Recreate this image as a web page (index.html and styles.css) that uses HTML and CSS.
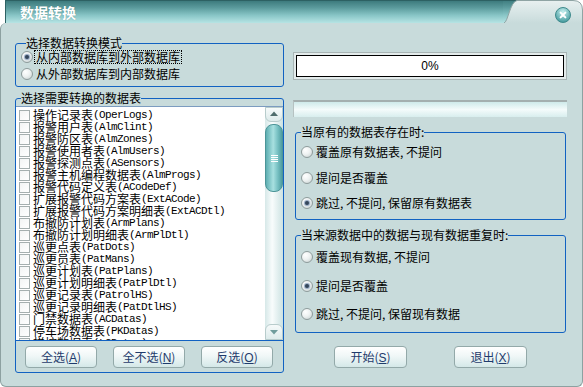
FILE: index.html
```html
<html>
  <head>
    <title>数据转换</title>
    <link rel="stylesheet" href="styles.css">
  </head>
  <body>
    <div class="window">
      <div class="titlebar">
        <div class="title-main">数据转换</div>
        <svg class="title-tab" width="80" height="23" viewBox="0 0 80 23">
          <defs>
            <linearGradient id="tg" x1="0" y1="0" x2="0" y2="1">
              <stop offset="0" stop-color="#3d7b7e"/>
              <stop offset="0.3" stop-color="#5a9a9c"/>
              <stop offset="0.65" stop-color="#88c5c6"/>
              <stop offset="1" stop-color="#b6e4e4"/>
            </linearGradient>
            <linearGradient id="tab" x1="0" y1="0" x2="0" y2="1">
              <stop offset="0" stop-color="#e8f0f0"/>
              <stop offset="1" stop-color="#c8dbdb"/>
            </linearGradient>
            <radialGradient id="cb" cx="0.5" cy="0.3" r="0.65">
              <stop offset="0" stop-color="#c8f0f0"/>
              <stop offset="1" stop-color="#4a9ea1"/>
            </radialGradient>
          </defs>
          <rect x="0" y="0" width="16" height="23" fill="url(#tg)"/>
          <rect x="0" y="0" width="16" height="1" fill="#2d6163"/>
          <path d="M1 23 C5 22 7 2 14 0.5 L70 0.5 Q79.5 0.5 79.5 10 L79.5 23 Z" fill="url(#tab)"/>
          <path d="M1 23 C5 22 7 2 14 0.5 L70 0.5 Q79.5 0.5 79.5 10 L79.5 23" fill="none" stroke="#8fa4a4"/>
          <circle cx="60" cy="15" r="7.5" fill="url(#cb)" stroke="#3f8a8c"/>
          <path d="M57.6 12.6 L62.4 17.4 M62.4 12.6 L57.6 17.4" stroke="#fff" stroke-width="2" stroke-linecap="round"/>
        </svg>
      </div>
      <div class="client">
        <div class="col-left">
          <fieldset class="group mode">
            <legend>选择数据转换模式</legend>
            <div class="opt"><span class="radio on"></span><span class="label focus">从内部数据库到外部数据库</span></div>
            <div class="opt"><span class="radio"></span><span class="label">从外部数据库到内部数据库</span></div>
          </fieldset>
          <fieldset class="group tables">
            <legend>选择需要转换的数据表</legend>
            <div class="list">
              <div class="items">
                <div class="item"><span class="chk"></span>操作记录表<span class="en">(OperLogs)</span></div>
                <div class="item"><span class="chk"></span>报警用户表<span class="en">(AlmClint)</span></div>
                <div class="item"><span class="chk"></span>报警防区表<span class="en">(AlmZones)</span></div>
                <div class="item"><span class="chk"></span>报警使用者表<span class="en">(AlmUsers)</span></div>
                <div class="item"><span class="chk"></span>报警探测点表<span class="en">(ASensors)</span></div>
                <div class="item"><span class="chk"></span>报警主机编程数据表<span class="en">(AlmProgs)</span></div>
                <div class="item"><span class="chk"></span>报警代码定义表<span class="en">(ACodeDef)</span></div>
                <div class="item"><span class="chk"></span>扩展报警代码方案表<span class="en">(ExtACode)</span></div>
                <div class="item"><span class="chk"></span>扩展报警代码方案明细表<span class="en">(ExtACDtl)</span></div>
                <div class="item"><span class="chk"></span>布撤防计划表<span class="en">(ArmPlans)</span></div>
                <div class="item"><span class="chk"></span>布撤防计划明细表<span class="en">(ArmPlDtl)</span></div>
                <div class="item"><span class="chk"></span>巡更点表<span class="en">(PatDots)</span></div>
                <div class="item"><span class="chk"></span>巡更员表<span class="en">(PatMans)</span></div>
                <div class="item"><span class="chk"></span>巡更计划表<span class="en">(PatPlans)</span></div>
                <div class="item"><span class="chk"></span>巡更计划明细表<span class="en">(PatPlDtl)</span></div>
                <div class="item"><span class="chk"></span>巡更记录表<span class="en">(PatrolHS)</span></div>
                <div class="item"><span class="chk"></span>巡更记录明细表<span class="en">(PatDtlHS)</span></div>
                <div class="item"><span class="chk"></span>门禁数据表<span class="en">(ACDatas)</span></div>
                <div class="item"><span class="chk"></span>停车场数据表<span class="en">(PKDatas)</span></div>
                <div class="item"><span class="chk"></span>梯控数据表<span class="en">(LCDatas)</span></div>
              </div>
              <div class="sb">
                <div class="sb-btn sb-up">
                  <svg width="8" height="5" viewBox="0 0 8 5"><path d="M0 5 L4 0.5 L8 5 Z" fill="#4f6d6d"/></svg>
                </div>
                <div class="sb-thumb"><span class="grip"></span></div>
                <div class="sb-track"></div>
                <div class="sb-btn sb-down">
                  <svg width="8" height="5" viewBox="0 0 8 5"><path d="M0 0 L4 4.5 L8 0 Z" fill="#6f9c9c"/></svg>
                </div>
              </div>
            </div>
            <div class="btn-row">
              <button class="btn">全选(<u>A</u>)</button>
              <button class="btn">全不选(<u>N</u>)</button>
              <button class="btn">反选(<u>O</u>)</button>
            </div>
          </fieldset>
        </div>
        <div class="col-right">
          <div class="progress"><div class="progress-in">0%</div></div>
          <div class="bar"></div>
          <fieldset class="group exist">
            <legend>当原有的数据表存在时:</legend>
            <div class="opts">
              <div class="opt"><span class="radio"></span><span class="label">覆盖原有数据表, 不提问</span></div>
              <div class="opt"><span class="radio"></span><span class="label">提问是否覆盖</span></div>
              <div class="opt"><span class="radio on"></span><span class="label">跳过, 不提问, 保留原有数据表</span></div>
            </div>
          </fieldset>
          <fieldset class="group dup">
            <legend>当来源数据中的数据与现有数据重复时:</legend>
            <div class="opts">
              <div class="opt"><span class="radio"></span><span class="label">覆盖现有数据, 不提问</span></div>
              <div class="opt"><span class="radio on"></span><span class="label">提问是否覆盖</span></div>
              <div class="opt"><span class="radio"></span><span class="label">跳过, 不提问, 保留现有数据</span></div>
            </div>
          </fieldset>
          <div class="btn-row actions">
            <button class="btn">开始(<u>S</u>)</button>
            <button class="btn">退出(<u>X</u>)</button>
          </div>
        </div>
      </div>
    </div>
  </body>
</html>
```

FILE: styles.css
```css
body {
  margin: 0px;
  padding: 0px;
  background-color: #FFF;
  font-family: "Noto Sans CJK SC", sans-serif;
  font-size: 12px;
  color: #000;
}
.window {
  width: 583px;
  height: 387px;
}
.titlebar {
  display: flex;
  height: 23px;
}
.title-main {
  flex: 1;
  margin-left: 5px;
  box-sizing: border-box;
  height: 23px;
  border-top: 1px solid #2D6163;
  border-left: 1px solid #2D6163;
  background: linear-gradient(to bottom, #3D7B7E 0%, #5A9A9C 30%, #88C5C6 65%, #B6E4E4 100%);
  color: #FFF;
  font-weight: bold;
  font-size: 14px;
  line-height: 22px;
  padding-left: 14px;
  text-shadow: 0 0 1px rgba(30, 80, 80, 0.4);
}
.title-tab {
  display: block;
}
.client {
  box-sizing: border-box;
  height: 364px;
  background-color: #C8DBDB;
  border: 1px solid #8DA1A1;
  border-top: 0;
  border-radius: 6px 0 6px 6px;
  display: grid;
  grid-template-columns: 269px 274px;
  column-gap: 9px;
  align-items: start;
  padding: 14px 0 0 14px;
}
.col-left, .col-right {
  display: flex;
  flex-direction: column;
}

/* group boxes */
.group {
  margin: 0;
  padding: 0;
  min-width: 0;
  border: 1px solid #1262C2;
  border-radius: 3px;
}
.group legend {
  padding: 0;
  margin-left: 5px;
  line-height: 12px;
  font-size: 12px;
}
.opt {
  display: flex;
  align-items: center;
  height: 14px;
}
.label {
  line-height: 12px;
  white-space: nowrap;
}
.focus {
  outline: 1px dotted #000;
  outline-offset: 0px;
  padding: 0 1px;
  margin-left: -1px;
}
.radio {
  box-sizing: border-box;
  width: 12px;
  height: 12px;
  border-radius: 50%;
  border: 1px solid #8E9C9C;
  background: radial-gradient(circle at 35% 30%, #FFF 0%, #EEF2F2 45%, #C4CECE 100%);
  margin-right: 3px;
  position: relative;
  flex: none;
}
.radio.on::after {
  content: "";
  position: absolute;
  left: 3px;
  top: 3px;
  width: 4px;
  height: 4px;
  border-radius: 50%;
  background: #34465A;
  box-shadow: 0 0 1px 1px #8FA4C0;
}

.mode {
  padding: 1px 0 5px 5px;
}
.mode .opt + .opt {
  margin-top: 3px;
}
.tables {
  margin-top: 5px;
}

/* table list */
.list {
  display: flex;
  margin-top: 2px;
  height: 235px;
  box-sizing: border-box;
  border-top: 1px solid #7C9CC0;
  border-bottom: 1px solid #1262C2;
  background-color: #FFF;
}
.items {
  flex: 1;
  overflow: hidden;
  padding: 2px 0 0 3px;
}
.item {
  display: flex;
  align-items: center;
  height: 12px;
  line-height: 12px;
  white-space: nowrap;
}
.chk {
  box-sizing: border-box;
  width: 11px;
  height: 11px;
  border: 1px solid #A5AFAF;
  background: linear-gradient(135deg, #F2F4F4, #FFF);
  margin-right: 3px;
  flex: none;
}
.en {
  font-family: "Liberation Mono", monospace;
  font-size: 11px;
  letter-spacing: -0.6px;
}
.sb {
  width: 18px;
  display: flex;
  flex-direction: column;
  background: linear-gradient(to right, #D6E8E8, #F8FCFC 40%, #CCE2E2);
}
.sb-btn {
  display: flex;
  justify-content: center;
  box-sizing: border-box;
  background: linear-gradient(to bottom, #F6FAFA, #DDEBEB);
  border: 1px solid #B8CCCC;
}
.sb-up {
  height: 15px;
  align-items: flex-start;
  padding-top: 3px;
  border-radius: 0 0 6px 6px;
}
.sb-down {
  height: 16px;
  align-items: flex-end;
  padding-bottom: 4px;
  border-radius: 6px 6px 0 0;
}
.sb-thumb {
  margin-top: 2px;
  height: 68px;
  box-sizing: border-box;
  border: 1px solid #4C9598;
  border-radius: 8px;
  background: linear-gradient(to right, #5DAEB1, #A8E0E0 45%, #7CC4C6 70%, #4F9EA1);
  display: flex;
  align-items: center;
  justify-content: center;
}
.grip {
  width: 7px;
  height: 7px;
  background: repeating-linear-gradient(to bottom, #FFF 0, #FFF 1px, transparent 1px, transparent 2px);
}
.sb-track {
  flex: 1;
}

/* buttons */
.btn-row {
  display: flex;
  gap: 16px;
  padding: 5px 0 4px 9px;
}
.btn {
  box-sizing: border-box;
  width: 72px;
  height: 22px;
  padding: 0;
  border: 1px solid #93A9A9;
  border-radius: 4px;
  background: linear-gradient(to bottom, #FFFFFF 0%, #F0F7F7 45%, #D4E8E8 100%);
  font-family: "Noto Sans CJK SC", sans-serif;
  font-size: 12px;
  line-height: 20px;
  color: #1F3B6C;
}
.btn u {
  font-family: "Liberation Sans", sans-serif;
}

/* right column */
.progress {
  margin-top: 15px;
  height: 28px;
  box-sizing: border-box;
  border: 1px solid #A9B5B5;
  padding: 2px;
  background-color: #E4ECEC;
}
.progress-in {
  box-sizing: border-box;
  height: 22px;
  border: 1px solid #000;
  background-color: #FFF;
  text-align: center;
  line-height: 20px;
  font-family: "Liberation Sans", sans-serif;
  font-size: 12px;
}
.bar {
  margin-top: 20px;
  height: 17px;
  box-sizing: border-box;
  border-top: 2px solid #A4AFAF;
  border-left: 1px solid #B6C2C2;
  background: linear-gradient(to bottom, #CFEAEA 0%, #F4FBFB 50%, #D8EEEE 100%);
}
.exist, .dup {
  margin: 9px 1px 0 2px;
}
.exist .opts {
  padding: 7px 0 9px 5px;
}
.exist .opt + .opt {
  margin-top: 12px;
}
.exist .opt:last-child {
  margin-top: 11px;
}
.dup .opts {
  padding: 9px 0 11px 5px;
}
.dup .opt + .opt {
  margin-top: 15px;
}
.dup .opt:last-child {
  margin-top: 14px;
}
.actions {
  margin-top: 13px;
  padding: 0 0 0 41px;
  gap: 47px;
}
.actions .btn {
  width: 73px;
}
```
